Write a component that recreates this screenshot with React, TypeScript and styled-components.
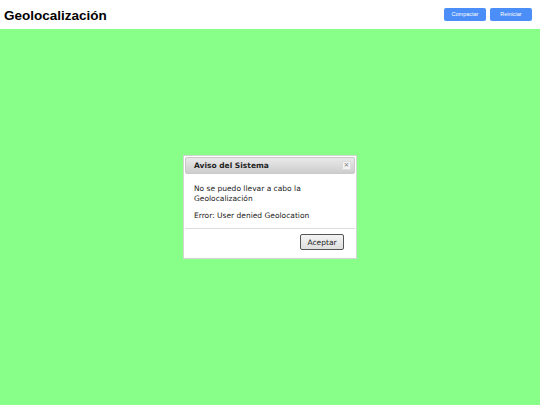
import React from "react";
import styled, { createGlobalStyle } from "styled-components";

const Global = createGlobalStyle`
  html, body { margin: 0; padding: 0; height: 100%; }
  body { font-family: "Liberation Sans", Arial, sans-serif; }
  #root { height: 100%; }
`;

const Page = styled.div`
  display: flex;
  flex-direction: column;
  height: 405px;
  width: 540px;
`;

const Header = styled.header`
  height: 29px;
  background: #ffffff;
  display: flex;
  align-items: center;
  justify-content: space-between;
  padding: 0 8px 0 4px;
  box-sizing: border-box;
  flex-shrink: 0;
`;

const Title = styled.h1`
  margin: 0;
  font-size: 13.5px;
  font-weight: bold;
  color: #000;
  font-family: "Liberation Sans", Arial, sans-serif;
  position: relative;
  top: 1px;
`;

const Actions = styled.div`
  display: flex;
  gap: 4px;
`;

const HeaderButton = styled.button`
  width: 42px;
  height: 13px;
  padding: 0;
  border: none;
  border-radius: 2px;
  background: #4b8ef7;
  color: #ffffff;
  font-family: "Liberation Sans", Arial, sans-serif;
  font-size: 5.5px;
  line-height: 13px;
  cursor: pointer;
`;

const Stage = styled.main`
  flex: 1;
  background: #88ff88;
  display: flex;
  align-items: center;
  justify-content: center;
  padding-bottom: 20px;
`;

const Dialog = styled.div`
  width: 174px;
  box-sizing: border-box;
  background: #ffffff;
  border: 1px solid #d4d4d4;
  padding: 1px;
  font-family: "DejaVu Sans", Verdana, sans-serif;
`;

const TitleBar = styled.div`
  height: 17px;
  box-sizing: border-box;
  display: flex;
  align-items: center;
  justify-content: space-between;
  padding: 0 3px 0 8px;
  background: linear-gradient(#e9e9e9, #cdcdcd);
  border: 1px solid #cacaca;
  border-radius: 2px;
`;

const DialogTitle = styled.span`
  font-size: 7.5px;
  font-weight: bold;
  color: #222;
`;

const CloseBox = styled.span`
  width: 9px;
  height: 9px;
  display: flex;
  align-items: center;
  justify-content: center;
  background: #f2f2f2;
  border: 1px solid #dcdcdc;
  box-sizing: border-box;
  font-size: 7px;
  line-height: 1;
  color: #777;
`;

const Body = styled.div`
  padding: 10px 9px 7px 9px;
  font-size: 7.5px;
  color: #222;
  line-height: 10px;
  display: flex;
  flex-direction: column;
  gap: 7px;
`;

const Para = styled.p`
  margin: 0;
`;

const Footer = styled.div`
  border-top: 1px solid #dddddd;
  display: flex;
  justify-content: flex-end;
  padding: 5px 11px 7px 0;
`;

const AcceptButton = styled.button`
  width: 44px;
  height: 16px;
  padding: 0;
  border: 1px solid #555;
  border-radius: 2px;
  background: linear-gradient(#f4f4f4, #dedede);
  font-family: "DejaVu Sans", Verdana, sans-serif;
  font-size: 7.5px;
  color: #222;
`;

export default function App() {
  return (
    <>
      <Global />
      <Page>
        <Header>
          <Title>Geolocalización</Title>
          <Actions>
            <HeaderButton>Compactar</HeaderButton>
            <HeaderButton>Reiniciar</HeaderButton>
          </Actions>
        </Header>
        <Stage>
          <Dialog>
            <TitleBar>
              <DialogTitle>Aviso del Sistema</DialogTitle>
              <CloseBox>×</CloseBox>
            </TitleBar>
            <Body>
              <Para>No se puedo llevar a cabo la Geolocalización</Para>
              <Para>Error: User denied Geolocation</Para>
            </Body>
            <Footer>
              <AcceptButton>Aceptar</AcceptButton>
            </Footer>
          </Dialog>
        </Stage>
      </Page>
    </>
  );
}
